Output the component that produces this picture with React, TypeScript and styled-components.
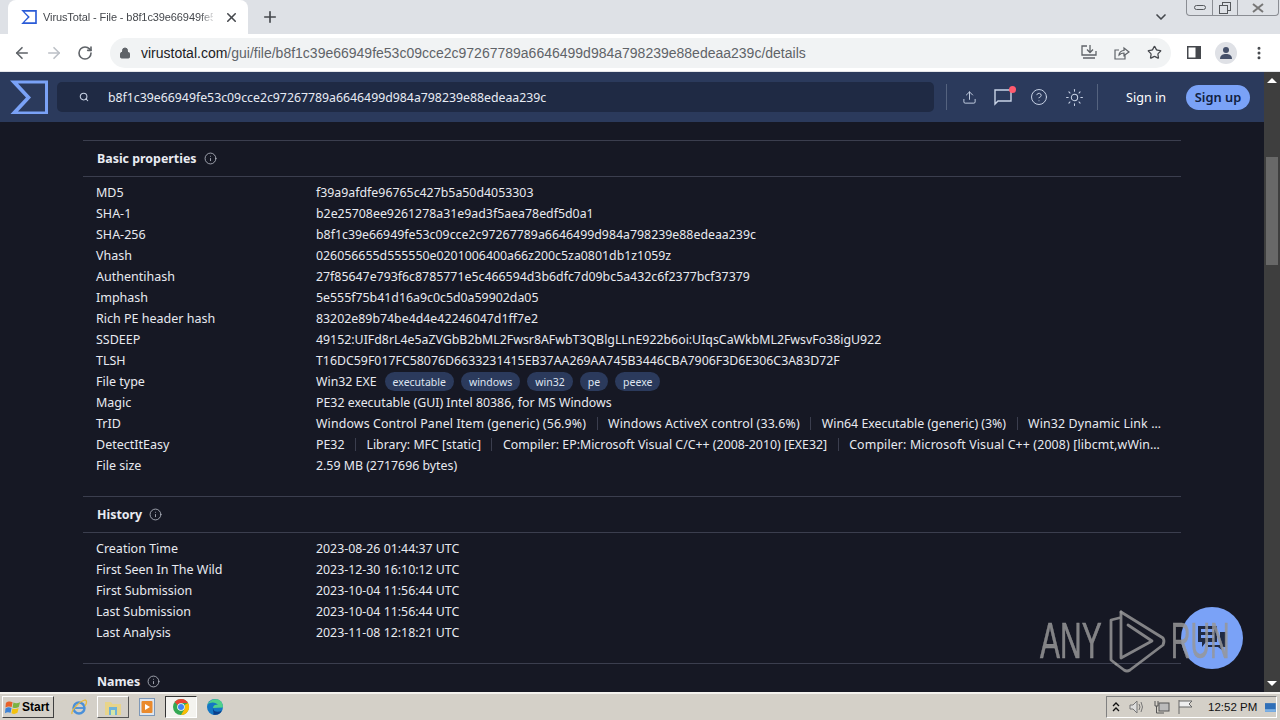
import React from 'react'
import styled, { createGlobalStyle } from 'styled-components'
import { ArrowLeft, ArrowRight, RotateCw, Lock, Plus, X, ChevronDown, Star, MoreVertical, Search, Upload, HelpCircle, Sun, Info } from 'lucide-react'

const Global = createGlobalStyle`
  html, body { margin: 0; padding: 0; background: #161824; overflow: hidden; }
  * { box-sizing: border-box; }
`

const Page = styled.div`
  position: relative;
  width: 1280px;
  height: 720px;
  display: flex;
  flex-direction: column;
  overflow: hidden;
  font-family: "Noto Sans", sans-serif;
`

/* browser chrome */
const TabStrip = styled.div`
  height: 34px;
  background: #dee1e6;
  display: flex;
  align-items: flex-end;
  padding-left: 8px;
  flex: none;
  position: relative;
`
const Tab = styled.div`
  width: 240px;
  height: 34px;
  background: #fff;
  border-radius: 8px 8px 0 0;
  display: flex;
  align-items: center;
  padding-left: 13px;
  font-family: "Liberation Sans", sans-serif;
  font-size: 11px;
  letter-spacing: -0.1px;
  color: #45484d;
`
const TabTitle = styled.span`
  margin-left: 6px;
  margin-right: 11px;
  width: 170px;
  height: 16px;
  line-height: 16px;
  white-space: nowrap;
  -webkit-mask-image: linear-gradient(to right, #000 92%, rgba(0, 0, 0, 0.2));
  mask-image: linear-gradient(to right, #000 92%, rgba(0, 0, 0, 0.2));
`
const NewTab = styled.div`
  margin-left: 13px;
  height: 34px;
  display: flex;
  align-items: center;
  color: #45484d;
`
const TabListBtn = styled.div`
  margin-left: auto;
  margin-right: 111px;
  height: 34px;
  display: flex;
  align-items: center;
  color: #45484d;
`
const WinButtons = styled.div`
  position: absolute;
  right: 1px;
  top: 0;
  width: 93px;
  height: 16px;
  border: 1px solid #8a8d93;
  border-top: none;
  border-radius: 0 0 4px 4px;
  display: grid;
  grid-template-columns: 25px 25px 1fr;
`
const WinBtn = styled.div`
  display: flex;
  align-items: center;
  justify-content: center;
  & + & { border-left: 1px solid #8a8d93; }
`
const Toolbar = styled.div`
  height: 38px;
  background: #fff;
  display: flex;
  align-items: center;
  padding-left: 13px;
  flex: none;
  border-bottom: 1px solid #e4e6ea;
  color: #5f6368;
`
const NavIcons = styled.div`
  display: flex;
  align-items: center;
  gap: 14px;
`
const Omnibox = styled.div`
  margin-left: 17px;
  width: 1061px;
  height: 30px;
  background: #f1f3f4;
  border-radius: 15px;
  display: flex;
  align-items: center;
  padding-left: 9px;
  font-family: "Liberation Sans", sans-serif;
  font-size: 14px;
  color: #5f6368;
`
const Host = styled.span`
  color: #202124;
`
const UrlText = styled.span`
  margin-left: 10px;
  white-space: nowrap;
`
const OmniActions = styled.div`
  margin-left: auto;
  margin-right: 9px;
  display: flex;
  align-items: center;
  gap: 17px;
  color: #5f6368;
`
const ToolbarEnd = styled.div`
  margin-left: 16px;
  display: flex;
  align-items: center;
  gap: 14px;
  color: #45484d;
`
const Avatar = styled.div`
  width: 22px;
  height: 22px;
  border-radius: 50%;
  background: #dfe1e6;
  display: flex;
  align-items: center;
  justify-content: center;
`

/* virustotal header */
const Viewport = styled.div`
  flex: 1;
  display: flex;
  min-height: 0;
`
const Main = styled.div`
  flex: 1;
  display: flex;
  flex-direction: column;
  background: #161824;
  min-width: 0;
`
const Header = styled.div`
  height: 50px;
  flex: none;
  background: #2b3a5c;
  display: flex;
  align-items: center;
  padding-left: 10px;
`
const SearchBox = styled.div`
  margin-left: 9px;
  width: 877px;
  height: 30px;
  background: #1f2a44;
  border-radius: 5px;
  display: flex;
  align-items: center;
  padding-left: 22px;
  color: #e8ecf4;
  font-size: 12.3px;
  gap: 19px;
`
const HeaderIcons = styled.div`
  margin-left: 12px;
  height: 26px;
  width: 152px;
  border-left: 1px solid #55637f;
  border-right: 1px solid #55637f;
  display: flex;
  align-items: center;
  padding-left: 15px;
  gap: 17px;
  color: #c9d3e6;
`
const Chat = styled.div`
  position: relative;
  display: flex;
`
const RedDot = styled.div`
  position: absolute;
  top: -3px;
  right: -3px;
  width: 7px;
  height: 7px;
  border-radius: 50%;
  background: #ff5a6e;
`
const SignIn = styled.div`
  margin-left: 28px;
  color: #fff;
  font-size: 12.6px;
`
const SignUp = styled.div`
  margin-left: 20px;
  width: 64px;
  height: 25px;
  border-radius: 13px;
  background: #7aa2f7;
  color: #10203f;
  font-size: 12.8px;
  font-weight: 600;
  display: flex;
  align-items: center;
  justify-content: center;
`

/* page content */
const Content = styled.div`
  flex: 1;
  padding: 18px 83px 0;
  overflow: hidden;
  min-height: 0;
`
const SectionHead = styled.div`
  height: 37px;
  border-top: 1px solid #3b3e4e;
  border-bottom: 1px solid #3b3e4e;
  display: flex;
  align-items: center;
  gap: 7px;
  padding-left: 14px;
  color: #e9ebf2;
  font-size: 12.4px;
  font-weight: 700;
  width: 1098px;
  svg { color: #b9bcc8; }
`
const Rows = styled.div`
  padding: 5px 13px 0;
  margin-bottom: 20px;
`
const Row = styled.div`
  height: 21px;
  display: grid;
  grid-template-columns: 220px 852px;
  align-items: center;
  color: #e8eaf0;
  white-space: nowrap;
`
const Label = styled.div`
  font-size: 12.5px;
`
const Value = styled.div`
  display: flex;
  align-items: center;
  min-width: 0;
  font-size: 12.35px;
`
const Tag = styled.span`
  height: 19px;
  padding: 0 8px;
  margin-left: 7px;
  border-radius: 10px;
  background: #2b3a5c;
  color: #dfe5f0;
  font-size: 10.5px;
  display: flex;
  align-items: center;
  &:first-of-type { margin-left: 8px; }
`
const Part = styled.span<{ $wide?: boolean }>`
  ${p => p.$wide && 'letter-spacing: 0.14px;'}
  &:not(:first-child)::before {
    content: "";
    display: inline-block;
    width: 1px;
    height: 13px;
    background: #3b3e4e;
    margin: 0 10.5px;
    vertical-align: -2px;
  }
`

/* scrollbar */
const ScrollBar = styled.div`
  width: 16px;
  flex: none;
  background: #3e3e3e;
  display: flex;
  flex-direction: column;
  align-items: center;
  justify-content: space-between;
  position: relative;
`
const ScrollArrow = styled.div<{ $down?: boolean }>`
  width: 0;
  height: 0;
  margin: 6px 0;
  border-left: 5px solid transparent;
  border-right: 5px solid transparent;
  ${p => (p.$down ? 'border-top: 5px solid #fff;' : 'border-bottom: 5px solid #fff;')}
`
const ScrollThumb = styled.div`
  position: absolute;
  top: 85px;
  left: 2px;
  width: 12px;
  height: 108px;
  background: #686868;
`

/* taskbar */
const Taskbar = styled.div`
  height: 28px;
  flex: none;
  background: #d4d0c8;
  border-top: 2px solid #f4f2ee;
  display: flex;
  align-items: center;
  padding-left: 2px;
`
const StartBtn = styled.div`
  width: 52px;
  height: 22px;
  background: #d4d0c8;
  border: 1px solid;
  border-color: #fff #404040 #404040 #fff;
  display: flex;
  align-items: center;
  padding-left: 2px;
  gap: 1px;
  font-family: "Liberation Sans", sans-serif;
  font-size: 12px;
  font-weight: 700;
  color: #000;
`
const QuickIcons = styled.div`
  display: flex;
  align-items: center;
  margin-left: 9px;
`
const QuickIcon = styled.div<{ $active?: boolean; $raised?: boolean }>`
  width: 32px;
  height: 22px;
  margin-right: 2px;
  display: flex;
  align-items: center;
  justify-content: center;
  ${p => p.$raised && 'border: 1px solid; border-color: #fff #555 #555 #fff;'}
  ${p => p.$active && 'border: 1px solid; border-color: #333 #fff #fff #333; background: #f4f3ef;'}
`
const Tray = styled.div`
  margin-left: auto;
  margin-right: 3px;
  width: 171px;
  height: 22px;
  border: 1px solid;
  border-color: #808080 #fff #fff #808080;
  display: flex;
  align-items: center;
  padding-left: 5px;
  font-family: "Liberation Sans", sans-serif;
  font-size: 11.5px;
  color: #111;
`
const TrayIcon = styled.span<{ $gap: number }>`
  display: flex;
  margin-left: ${p => p.$gap}px;
`
const TrayTime = styled.span`
  margin-left: 15px;
  margin-right: 8px;
  white-space: nowrap;
`

/* overlays */
const Watermark = styled.div`
  position: absolute;
  left: 1040px;
  top: 608px;
  height: 66px;
  display: flex;
  align-items: center;
  color: rgba(150, 150, 152, 0.85);
  -webkit-text-stroke: 0.6px rgba(150, 150, 152, 0.85);
  font-family: "Liberation Sans", sans-serif;
  font-size: 50px;
  line-height: 60px;
  z-index: 3;
`
const WmText = styled.span`
  display: inline-block;
  width: 68px;
  transform: scaleX(0.6);
  transform-origin: left center;
`
const WmRun = styled(WmText)`
  width: 64px;
  margin-left: 3px;
  transform: scaleX(0.54);
`
const ChatFab = styled.div`
  position: absolute;
  left: 1181px;
  top: 607px;
  width: 62px;
  height: 62px;
  border-radius: 50%;
  background: #7aa2f7;
  display: flex;
  align-items: center;
  justify-content: center;
  z-index: 2;
  color: #1f2a44;
`

const basics: [string, string][] = [
  ['MD5', 'f39a9afdfe96765c427b5a50d4053303'],
  ['SHA-1', 'b2e25708ee9261278a31e9ad3f5aea78edf5d0a1'],
  ['SHA-256', 'b8f1c39e66949fe53c09cce2c97267789a6646499d984a798239e88edeaa239c'],
  ['Vhash', '026056655d555550e0201006400a66z200c5za0801db1z1059z'],
  ['Authentihash', '27f85647e793f6c8785771e5c466594d3b6dfc7d09bc5a432c6f2377bcf37379'],
  ['Imphash', '5e555f75b41d16a9c0c5d0a59902da05'],
  ['Rich PE header hash', '83202e89b74be4d4e42246047d1ff7e2'],
  ['SSDEEP', '49152:UIFd8rL4e5aZVGbB2bML2Fwsr8AFwbT3QBlgLLnE922b6oi:UIqsCaWkbML2FwsvFo38igU922'],
  ['TLSH', 'T16DC59F017FC58076D6633231415EB37AA269AA745B3446CBA7906F3D6E306C3A83D72F'],
]

const history = [
  ['Creation Time', '2023-08-26 01:44:37 UTC'],
  ['First Seen In The Wild', '2023-12-30 16:10:12 UTC'],
  ['First Submission', '2023-10-04 11:56:44 UTC'],
  ['Last Submission', '2023-10-04 11:56:44 UTC'],
  ['Last Analysis', '2023-11-08 12:18:21 UTC'],
]

const tags = ['executable', 'windows', 'win32', 'pe', 'peexe']

function VtLogo({ size }: { size: number }) {
  return (
    <svg width={size} height={size * 0.92} viewBox="0 0 38 34" fill="none">
      <path d="M0 0H38V34H0L16 17Z" fill="#7aa2f7" />
      <path d="M8 3H35V31H8L21 17Z" fill="#2b3a5c" />
    </svg>
  )
}

function TabLogo() {
  return (
    <svg width="16" height="14" viewBox="0 0 38 34" fill="none">
      <path d="M0 0H38V34H0L16 17Z" fill="#2a5bd7" />
      <path d="M8 4H34V30H8L21 17Z" fill="#fff" />
    </svg>
  )
}

function Flag() {
  return (
    <svg width="16" height="15" viewBox="0 0 18 16">
      <path d="M1 3C3 1 6 1 8.500 2L7.500 7.500C5 6.500 3 6.500 0.500 8Z" fill="#e8622a" />
      <path d="M9.500 2.500C12 3.500 14 3.500 17 2L15.500 7.500C13 9 11 9 8.500 8Z" fill="#7cb342" />
      <path d="M0.500 9C3 7.500 5 7.500 7.300 8.500L6.300 14C4 13 2 13 0 14.500Z" fill="#3d82d6" />
      <path d="M8.300 9C11 10 13 10 15.300 8.500L14 14C11.500 15.500 9.500 15.500 7.300 14.500Z" fill="#f4c20d" />
    </svg>
  )
}

function IeIcon() {
  return (
    <svg width="18" height="18" viewBox="0 0 18 18" fill="none">
      <circle cx="9" cy="10" r="5.500" stroke="#4a90d9" strokeWidth="2.400" />
      <path d="M4 10H14" stroke="#4a90d9" strokeWidth="1.800" />
      <path d="M2 16C1 13 8 4 15 2C17 2 17 5 15 8" stroke="#e8b93c" strokeWidth="1.300" />
    </svg>
  )
}

function FolderIcon() {
  return (
    <svg width="18" height="17" viewBox="0 0 18 17">
      <path d="M1 3H7L8.500 5H17V16H1Z" fill="#e8d48a" />
      <rect x="5" y="8" width="8" height="8" fill="#6fb3d9" />
      <rect x="7" y="11" width="4" height="5" fill="#d4e6a8" />
    </svg>
  )
}

function PlayerIcon() {
  return (
    <svg width="16" height="18" viewBox="0 0 16 18">
      <rect x="0.500" y="0.500" width="15" height="17" fill="#dfe6ef" stroke="#7d98b8" />
      <rect x="2.500" y="3" width="11" height="12" rx="1" fill="#ea8a2c" />
      <path d="M6 6L11 9L6 12Z" fill="#fff" />
    </svg>
  )
}

function ChromeIcon() {
  return (
    <svg width="18" height="18" viewBox="0 0 18 18">
      <circle cx="9" cy="9" r="8" fill="#34a853" />
      <path d="M9 1A8 8 0 0 1 16 5H9A4 4 0 0 0 5.500 7L2.700 4A8 8 0 0 1 9 1Z" fill="#ea4335" />
      <path d="M16 5A8 8 0 0 1 9 17L12.500 11A4 4 0 0 0 12.500 7Z" fill="#fbbc05" />
      <circle cx="9" cy="9" r="3.800" fill="#fff" />
      <circle cx="9" cy="9" r="3" fill="#4285f4" />
    </svg>
  )
}

function EdgeIcon() {
  return (
    <svg width="18" height="18" viewBox="0 0 18 18">
      <circle cx="9" cy="9" r="8" fill="#1577c4" />
      <path d="M1.500 7C3 2 8 0.500 12 1.500C15.500 2.500 17 6 17 9.500L7 10C7 7 10 6 12 7C10 4 4 3.500 1.500 7Z" fill="#4fd18b" />
      <path d="M7 10C7.500 14 12 15 16 12.500C14.500 16 10.500 17.500 7 16.500C8.500 15 6.500 13 7 10Z" fill="#0b3f8a" />
    </svg>
  )
}

function PlayMark() {
  return (
    <svg width="60" height="66" viewBox="0 0 60 66" fill="none" stroke="rgba(150,150,152,0.85)" strokeWidth="2.800" strokeLinejoin="round" strokeLinecap="round">
      <path d="M11 10L3 12V52L8 56" />
      <path d="M13 4V50L44 33L20 17" />
      <path d="M13 4L55 30Q57 33 55 37L22 62Q19 64 16 62L8 56" />
    </svg>
  )
}

function InfoMark() {
  return <Info size={13} strokeWidth={1.500} />
}

export default function App() {
  return (
    <Page>
      <Global />
      <TabStrip>
        <Tab>
          <TabLogo />
          <TabTitle>VirusTotal - File - b8f1c39e66949fe5</TabTitle>
          <X size={15} strokeWidth={2.500} />
        </Tab>
        <NewTab><Plus size={18} strokeWidth={2.200} /></NewTab>
        <TabListBtn><ChevronDown size={16} strokeWidth={2.500} /></TabListBtn>
        <WinButtons>
          <WinBtn>
            <svg width="12" height="6" viewBox="0 0 12 6" fill="none" stroke="#55585c"><rect x="0.500" y="0.500" width="11" height="4" rx="2" /></svg>
          </WinBtn>
          <WinBtn>
            <svg width="12" height="12" viewBox="0 0 12 12" fill="none" stroke="#55585c"><rect x="3.500" y="0.500" width="8" height="8" /><rect x="0.500" y="3.500" width="8" height="8" fill="#dee1e6" /></svg>
          </WinBtn>
          <WinBtn>
            <svg width="12" height="10" viewBox="0 0 12 10" fill="none" stroke="#777"><path d="M1 1L11 9M11 1L1 9" strokeWidth="2" /></svg>
          </WinBtn>
        </WinButtons>
      </TabStrip>
      <Toolbar>
        <NavIcons>
          <ArrowLeft size={18} strokeWidth={2.200} />
          <ArrowRight size={18} strokeWidth={2.200} color="#bcc0c6" />
          <RotateCw size={16} strokeWidth={2.400} />
        </NavIcons>
        <Omnibox>
          <Lock size={12} fill="#5f6368" />
          <UrlText><Host>virustotal.com</Host>/gui/file/b8f1c39e66949fe53c09cce2c97267789a6646499d984a798239e88edeaa239c/details</UrlText>
          <OmniActions>
            <svg width="16" height="15" viewBox="0 0 16 15" fill="none" stroke="#5f6368" strokeWidth="1.300">
              <path d="M6 1H1V10H15V6M9 0V7M6 4.500L9 7.500L12 4.500M2 13H14" />
            </svg>
            <svg width="16" height="14" viewBox="0 0 16 14" fill="none" stroke="#5f6368" strokeWidth="1.200">
              <path d="M5 4H1V13H11V9M5 9C5 6 8 4.500 10 4.500V2L15 6L10 9.500V7C8 7 6 8 5 9Z" />
            </svg>
            <Star size={15} strokeWidth={2} color="#45484d" />
          </OmniActions>
        </Omnibox>
        <ToolbarEnd>
          <svg width="14" height="14" viewBox="0 0 14 14"><rect x="0" y="0" width="14" height="13" fill="#45484d" /><rect x="1.500" y="1.500" width="7" height="10" fill="#fff" /></svg>
          <Avatar>
            <svg width="14" height="14" viewBox="0 0 14 14" fill="#45506a"><circle cx="7" cy="4" r="3" /><path d="M1 13C1 9 4 8 7 8C10 8 13 9 13 13Z" /></svg>
          </Avatar>
          <MoreVertical size={16} strokeWidth={2.500} />
        </ToolbarEnd>
      </Toolbar>
      <Viewport>
        <Main>
          <Header>
            <VtLogo size={38} />
            <SearchBox>
              <Search size={10} strokeWidth={2.500} color="#c9d3e6" />
              b8f1c39e66949fe53c09cce2c97267789a6646499d984a798239e88edeaa239c
            </SearchBox>
            <HeaderIcons>
              <Upload size={15} strokeWidth={1.500} />
              <Chat>
                <svg width="19" height="17" viewBox="0 0 19 17" fill="none" stroke="#c9d3e6" strokeWidth="1.400">
                  <path d="M1 1H17V12H4L1 15Z" />
                </svg>
                <RedDot />
              </Chat>
              <HelpCircle size={18} strokeWidth={1.300} />
              <Sun size={19} strokeWidth={1.300} />
            </HeaderIcons>
            <SignIn>Sign in</SignIn>
            <SignUp>Sign up</SignUp>
          </Header>
          <Content>
            <SectionHead>Basic properties <InfoMark /></SectionHead>
            <Rows>
              {basics.map(([k, v]) => (
                <Row key={k}><Label>{k}</Label><Value>{v}</Value></Row>
              ))}
              <Row>
                <Label>File type</Label>
                <Value>
                  Win32 EXE
                  {tags.map(t => <Tag key={t}>{t}</Tag>)}
                </Value>
              </Row>
              <Row><Label>Magic</Label><Value>PE32 executable (GUI) Intel 80386, for MS Windows</Value></Row>
              <Row>
                <Label>TrID</Label>
                <Value>
                  <Part $wide>Windows Control Panel Item (generic) (56.9%)</Part>
                  <Part $wide>Windows ActiveX control (33.6%)</Part>
                  <Part>Win64 Executable (generic) (3%)</Part>
                  <Part $wide>Win32 Dynamic Link …</Part>
                </Value>
              </Row>
              <Row>
                <Label>DetectItEasy</Label>
                <Value>
                  <Part>PE32</Part>
                  <Part>Library: MFC [static]</Part>
                  <Part>Compiler: EP:Microsoft Visual C/C++ (2008-2010) [EXE32]</Part>
                  <Part $wide>Compiler: Microsoft Visual C++ (2008) [libcmt,wWin…</Part>
                </Value>
              </Row>
              <Row><Label>File size</Label><Value>2.59 MB (2717696 bytes)</Value></Row>
            </Rows>
            <SectionHead>History <InfoMark /></SectionHead>
            <Rows>
              {history.map(([k, v]) => (
                <Row key={k}><Label>{k}</Label><Value>{v}</Value></Row>
              ))}
            </Rows>
            <SectionHead>Names <InfoMark /></SectionHead>
          </Content>
        </Main>
        <ScrollBar>
          <ScrollArrow />
          <ScrollThumb />
          <ScrollArrow $down />
        </ScrollBar>
      </Viewport>
      <Taskbar>
        <StartBtn><Flag />Start</StartBtn>
        <QuickIcons>
          <QuickIcon><IeIcon /></QuickIcon>
          <QuickIcon $raised><FolderIcon /></QuickIcon>
          <QuickIcon><PlayerIcon /></QuickIcon>
          <QuickIcon $active><ChromeIcon /></QuickIcon>
          <QuickIcon><EdgeIcon /></QuickIcon>
        </QuickIcons>
        <Tray>
          <TrayIcon $gap={0}>
            <svg width="8" height="10" viewBox="0 0 8 10" fill="none" stroke="#111" strokeWidth="1.300"><path d="M1 4L4 1L7 4M1 9L4 6L7 9" /></svg>
          </TrayIcon>
          <TrayIcon $gap={9}>
            <svg width="16" height="14" viewBox="0 0 16 14" fill="none" stroke="#777"><path d="M1 5H4L8 1V13L4 9H1Z" fill="#ddd" /><path d="M10 4Q12 7 10 10M12 2Q15 7 12 12" /></svg>
          </TrayIcon>
          <TrayIcon $gap={9}>
            <svg width="16" height="14" viewBox="0 0 16 14" fill="none" stroke="#555"><rect x="5" y="3" width="10" height="8" fill="#bbb" /><path d="M1 1V6H4V1M2.500 6V13H10" /></svg>
          </TrayIcon>
          <TrayIcon $gap={7}>
            <svg width="16" height="14" viewBox="0 0 16 14" fill="none" stroke="#666"><path d="M2 0V14M2 1H15L12 4L15 7H2" fill="#eee" /></svg>
          </TrayIcon>
          <TrayTime>12:52 PM</TrayTime>
          <svg width="16" height="13" viewBox="0 0 16 13"><rect width="16" height="13" fill="#2f6fb8" /><rect y="9" width="16" height="4" fill="#7fb2e5" /></svg>
        </Tray>
      </Taskbar>
      <ChatFab>
        <svg width="32" height="26" viewBox="0 0 30 26" fill="currentColor">
          <path d="M1 1H20V17H9L5 22V17H1ZM4 4V7H17V4ZM4 10V13H17V10Z" fillRule="evenodd" />
          <path d="M23 7H29V22H25V25L21 22H11V20H23Z" />
        </svg>
      </ChatFab>
      <Watermark>
        <WmText>ANY</WmText>
        <PlayMark />
        <WmRun>RUN</WmRun>
      </Watermark>
    </Page>
  )
}
